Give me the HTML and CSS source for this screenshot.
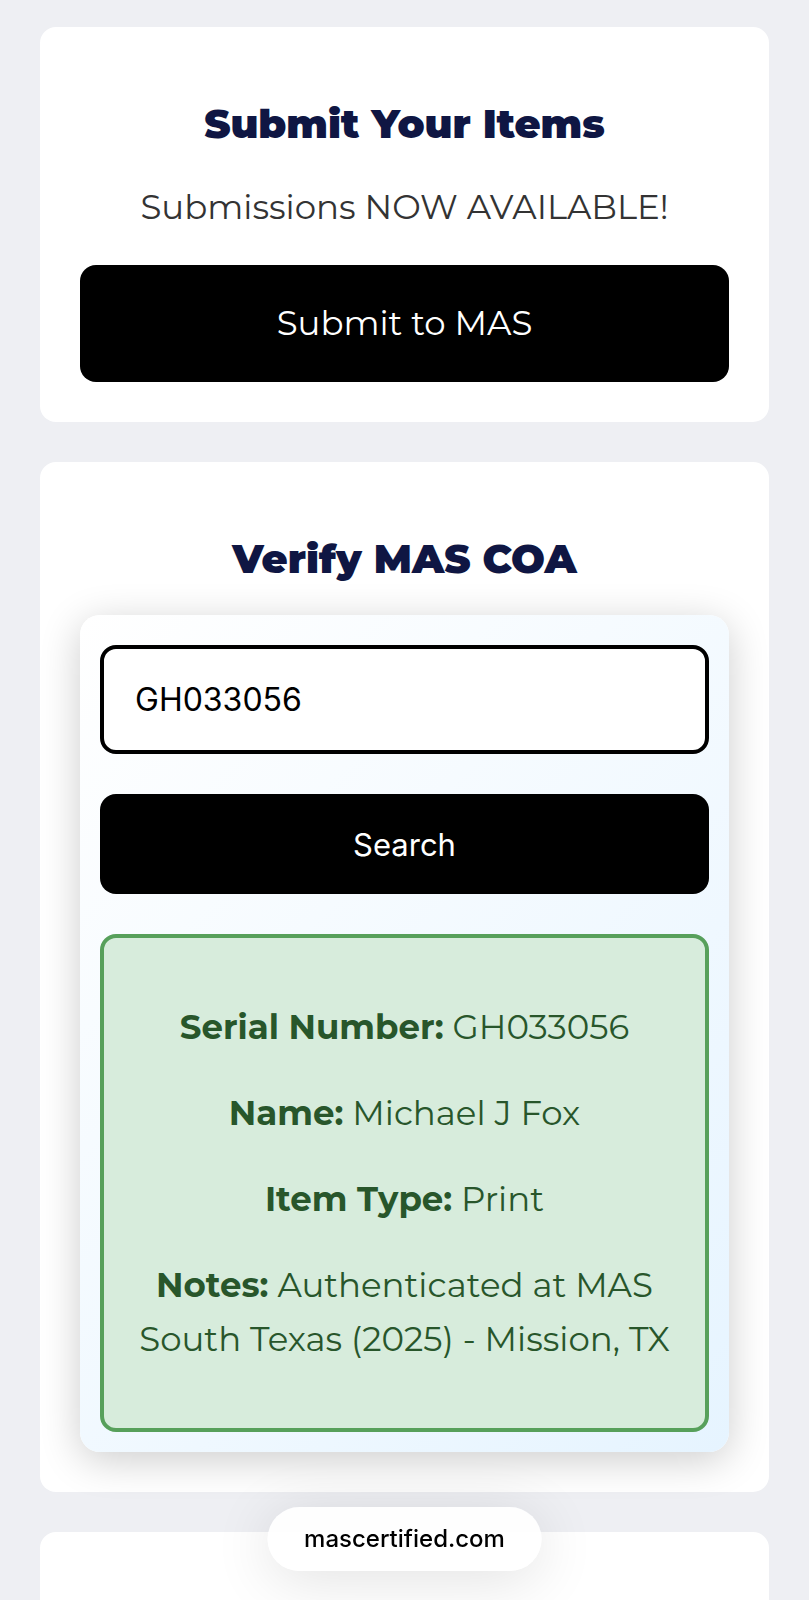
FILE: index.html
```html
<!DOCTYPE html>
<html lang="en">
<head>
    <meta charset="UTF-8">
    <meta name="viewport" content="width=device-width, initial-scale=1.0">
    <title>MAS Certified</title>
    <link rel="stylesheet" href="styles.css">
</head>
<body>

    <main class="page">
        <section class="card">
            <h2>Submit Your Items</h2>
            <p class="lead">Submissions NOW AVAILABLE!</p>
            <a class="btn submit-btn" href="#submit">Submit to MAS</a>
        </section>

        <section class="card">
            <h2>Verify MAS COA</h2>
            <form class="verify">
                <input type="text" id="serial" class="serial-input" value="GH033056" aria-label="Serial number">
                <button type="button" class="btn search-btn">Search</button>
                <div class="result">
                    <p><strong>Serial Number:</strong> GH033056</p>
                    <p><strong>Name:</strong> Michael J Fox</p>
                    <p><strong>Item Type:</strong> Print</p>
                    <p><strong>Notes:</strong> Authenticated at MAS South Texas (2025) - Mission, TX</p>
                </div>
            </form>
        </section>

        <section class="card card-next"></section>
    </main>

    <a class="address" href="#top">mascertified.com</a>

</body>
</html>
```

FILE: styles.css
```css
* {
    box-sizing: border-box;
}
body {
    margin: 0;
    font-family: Montserrat, Inter, sans-serif;
    font-size: 34px;
    line-height: 54px;
    color: #333;
    background-color: #eeeff3;
}
.page {
    display: flex;
    flex-direction: column;
    gap: 40px;
    min-height: 100vh;
    padding: 27px 40px 0;
}
.card {
    background-color: #fff;
    border-radius: 16px;
    padding: 40px;
    text-align: center;
}
.card-next {
    flex: 1;
    padding: 0;
    border-radius: 16px 16px 0 0;
}
h2 {
    margin: 31px 0 30px;
    font-size: 40px;
    line-height: 52px;
    font-weight: 900;
    color: #0f1643;
}
.lead {
    margin: 0 0 31px;
}
.btn {
    display: block;
    width: 100%;
    border: none;
    border-radius: 16px;
    background-color: #000;
    color: #fff;
    text-align: center;
    text-decoration: none;
    cursor: pointer;
}
.submit-btn {
    padding: 31px 20px 32px;
}

/* Lookup panel */
.verify {
    display: flex;
    flex-direction: column;
    gap: 40px;
    padding: 30px 20px 20px;
    border-radius: 20px;
    background: linear-gradient(135deg, #fff, #e6f4ff);
    box-shadow: 0 8px 40px rgba(0, 0, 0, 0.2);
}
.serial-input {
    width: 100%;
    height: 109px;
    padding: 0 31px;
    border: 4px solid #000;
    border-radius: 16px;
    background-color: #fff;
    font-family: Inter, sans-serif;
    font-size: 32px;
    color: #000;
}
.search-btn {
    height: 100px;
    font-family: Inter, sans-serif;
    font-size: 31px;
}
.result {
    padding: 30px 26px;
    border: 4px solid #57a05b;
    border-radius: 16px;
    background-color: #d7ecdc;
    color: #28562b;
}
.result p {
    margin: 32px 0;
}
.result strong {
    font-weight: 700;
}

/* Floating address pill */
.address {
    position: fixed;
    bottom: 29px;
    left: 50%;
    transform: translateX(-50%);
    padding: 5px 37px;
    border-radius: 32px;
    background-color: rgba(255, 255, 255, 0.9);
    box-shadow: 0 8px 60px rgba(0, 0, 0, 0.12);
    font-family: Inter, sans-serif;
    font-size: 24px;
    font-weight: 500;
    color: #000;
    text-decoration: none;
}
```
